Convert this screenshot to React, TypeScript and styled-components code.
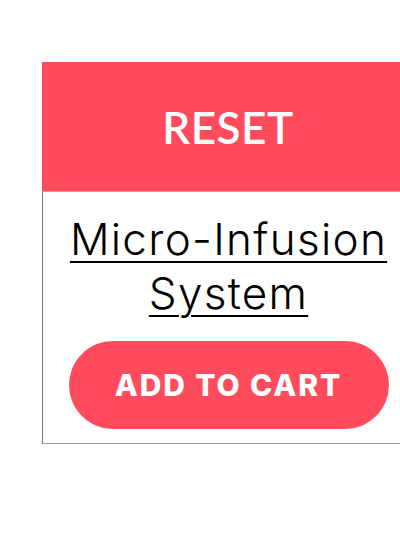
import React from 'react'
import styled, { createGlobalStyle } from 'styled-components'

const GlobalStyle = createGlobalStyle`
  html, body {
    margin: 0;
    padding: 0;
    background: #ffffff;
    overflow: hidden;
  }
`

const Page = styled.div`
  padding: 62px 0 0 42px;
  width: 460px;
`

const Card = styled.div`
  display: flex;
  flex-direction: column;
  width: 372px;
  box-sizing: border-box;
`

const Header = styled.button`
  display: flex;
  align-items: center;
  justify-content: center;
  height: 129px;
  border: none;
  background: #ff4b5c;
  color: #ffffff;
  font-family: Lato, 'Noto Sans', sans-serif;
  font-weight: 600;
  font-size: 44px;
  letter-spacing: 0.5px;
  cursor: pointer;
`

const Body = styled.div`
  display: flex;
  flex-direction: column;
  align-items: center;
  padding: 20px 26px 14px;
  border-left: 1px solid #7a7a7a;
  border-bottom: 1px solid #9a9a9a;
  border-top: 1px solid #ff8a95;
`

const Title = styled.a`
  display: block;
  margin: 0 0 21px;
  text-align: center;
  color: #000000;
  font-family: Inter, 'Open Sans', sans-serif;
  font-weight: 300;
  font-size: 44px;
  line-height: 54px;
  letter-spacing: 1.3px;
  text-decoration: underline;
  text-decoration-thickness: 2px;
  text-underline-offset: 6px;
`

const CartButton = styled.button`
  width: 320px;
  height: 88px;
  border: none;
  border-radius: 44px;
  background: #ff4b5c;
  color: #ffffff;
  font-family: Inter, 'Noto Sans', sans-serif;
  font-weight: 800;
  font-size: 30px;
  letter-spacing: 1.9px;
  cursor: pointer;
`

export default function App() {
  return (
    <Page>
      <GlobalStyle />
      <Card>
        <Header>RESET</Header>
        <Body>
          <Title href="#">Micro-Infusion System</Title>
          <CartButton>ADD TO CART</CartButton>
        </Body>
      </Card>
    </Page>
  )
}
